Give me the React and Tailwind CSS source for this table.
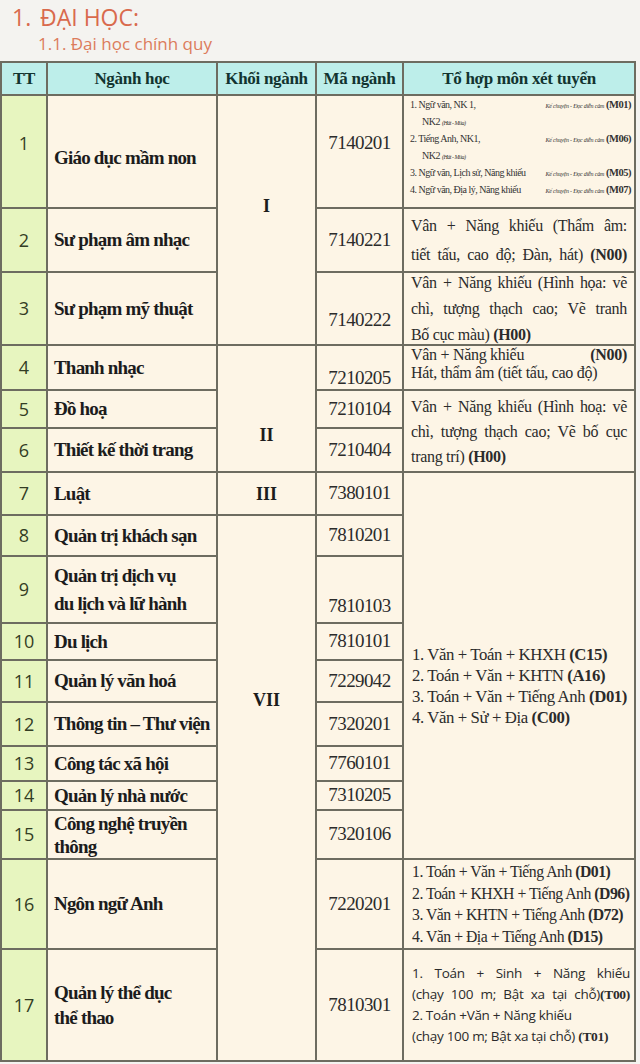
const cell = "bg-[#fdf5e6]";

const rows = [
  { tt: "1", name: "Giáo dục mầm non", code: "7140201", row: "row-start-2", nameCls: "pt-[13px]", codeCls: "pb-[17px]", ttCls: "pb-[17px]" },
  { tt: "2", name: "Sư phạm âm nhạc", code: "7140221", row: "row-start-3" },
  { tt: "3", name: "Sư phạm mỹ thuật", code: "7140222", row: "row-start-4", codeCls: "pt-[23px]" },
  { tt: "4", name: "Thanh nhạc", code: "7210205", row: "row-start-5", codeCls: "pt-[22px]" },
  { tt: "5", name: "Đồ hoạ", code: "7210104", row: "row-start-6" },
  { tt: "6", name: "Thiết kế thời trang", code: "7210404", row: "row-start-7" },
  { tt: "7", name: "Luật", code: "7380101", row: "row-start-8" },
  { tt: "8", name: "Quản trị khách sạn", code: "7810201", row: "row-start-9" },
  { tt: "9", name: ["Quản trị dịch vụ", "du lịch và lữ hành"], code: "7810103", row: "row-start-10", lh: "leading-[28px]", codeCls: "pt-[33px]" },
  { tt: "10", name: "Du lịch", code: "7810101", row: "row-start-11" },
  { tt: "11", name: "Quản lý văn hoá", code: "7229042", row: "row-start-12" },
  { tt: "12", name: "Thông tin – Thư viện", code: "7320201", row: "row-start-13" },
  { tt: "13", name: "Công tác xã hội", code: "7760101", row: "row-start-14" },
  { tt: "14", name: "Quản lý nhà nước", code: "7310205", row: "row-start-15" },
  { tt: "15", name: ["Công nghệ truyền", "thông"], code: "7320106", row: "row-start-16", lh: "leading-[23px]" },
  { tt: "16", name: "Ngôn ngữ Anh", code: "7220201", row: "row-start-17" },
  { tt: "17", name: ["Quản lý thể dục", "thể thao"], code: "7810301", row: "row-start-18", lh: "leading-[25px]" },
];

function TinyLine({ left, code }) {
  return (
    <div className="flex justify-between items-baseline whitespace-nowrap">
      <span>{left}</span>
      <span>
        <i className="text-[6px] tracking-[-0.2px]">Kể chuyện - Đọc diễn cảm</i>{" "}
        <b className="text-[10.5px]">{code}</b>
      </span>
    </div>
  );
}

function J({ children }) {
  return <div className="whitespace-nowrap text-justify [text-align-last:justify]">{children}</div>;
}

export default function App() {
  return (
    <div className="w-[640px] h-[1064px] bg-[#f4f3f0] font-['Liberation_Serif',serif] overflow-hidden">
      <div className="h-[61px] pl-[12px] pt-[2px] font-['Open_Sans',sans-serif] text-[#d96a4d]">
        <div className="flex items-center h-[30px] text-[23px] leading-[30px]">
          <span className="w-[28px]">1.</span>
          <span>ĐẠI HỌC:</span>
        </div>
        <div className="pl-[26px] text-[17px] leading-[24px] text-[#dc7c5c]">1.1. Đại học chính quy</div>
      </div>

      <div className="grid w-[636px] gap-[2px] p-[2px] bg-[#6d6c60] grid-cols-[44px_168px_97px_85px_230px] grid-rows-[31px_111px_62px_71px_43px_36px_42px_41px_39px_65px_35px_40px_42px_33px_27px_47px_88px_110px]">
        {["TT", "Ngành học", "Khối ngành", "Mã ngành", "Tổ hợp môn xét tuyển"].map((h) => (
          <div
            key={h}
            className="row-start-1 bg-[#bdeeea] flex items-center justify-center font-bold text-[17px] tracking-[-0.3px] text-[#123430]"
          >
            {h}
          </div>
        ))}

        {rows.map((r) => (
          <div
            key={"tt" + r.tt}
            className={`col-start-1 ${r.row} bg-[#e7f5bf] flex items-center justify-center font-['Open_Sans',sans-serif] text-[18px] text-[#333d24] ${r.ttCls || ""}`}
          >
            {r.tt}
          </div>
        ))}

        {rows.map((r) => (
          <div
            key={"nm" + r.tt}
            className={`col-start-2 ${r.row} ${cell} flex flex-col justify-center pl-[6px] font-bold text-[19px] tracking-[-0.8px] text-[#1c1c1c] ${r.lh || "leading-[24px]"} ${r.nameCls || ""}`}
          >
            {Array.isArray(r.name) ? r.name.map((n) => <div key={n}>{n}</div>) : <div>{r.name}</div>}
          </div>
        ))}

        {rows.map((r) => (
          <div
            key={"cd" + r.tt}
            className={`col-start-4 ${r.row} ${cell} flex items-center justify-center text-[19px] tracking-[-0.6px] text-[#2b2b2b] ${r.codeCls || ""}`}
          >
            {r.code}
          </div>
        ))}

        <div className={`col-start-3 row-start-2 row-span-3 ${cell} flex justify-center pt-[98px] font-bold text-[18px] leading-[24px] text-[#1c1c1c]`}>I</div>
        <div className={`col-start-3 row-start-5 row-span-3 ${cell} flex justify-center pt-[77px] font-bold text-[18px] leading-[24px] text-[#1c1c1c]`}>II</div>
        <div className={`col-start-3 row-start-8 ${cell} flex items-center justify-center font-bold text-[18px] leading-[24px] text-[#1c1c1c]`}>III</div>
        <div className={`col-start-3 row-start-9 row-span-10 ${cell} flex justify-center pt-[172px] font-bold text-[18px] leading-[24px] text-[#1c1c1c]`}>VII</div>

        <div className={`col-start-5 row-start-2 ${cell} pl-[6px] pr-[3px] pt-[1px] text-[10px] leading-[16px] tracking-[-0.5px] text-[#333]`}>
          <TinyLine left="1. Ngữ văn, NK 1," code="(M01)" />
          <div className="pl-[12px]">
            NK2 <i className="text-[6px]">(Hát - Múa)</i>
          </div>
          <TinyLine left="2. Tiếng Anh, NK1," code="(M06)" />
          <div className="pl-[12px]">
            NK2 <i className="text-[6px]">(Hát - Múa)</i>
          </div>
          <TinyLine left="3. Ngữ văn, Lịch sử, Năng khiếu" code="(M05)" />
          <TinyLine left="4. Ngữ văn, Địa lý, Năng khiếu" code="(M07)" />
        </div>

        <div className={`col-start-5 row-start-3 ${cell} flex flex-col justify-center px-[7px] text-[16px] leading-[29px] tracking-[-0.3px] text-[#2b2b2b]`}>
          <J>Vân + Năng khiếu (Thẩm âm:</J>
          <J>
            tiết tấu, cao độ; Đàn, hát) <b>(N00)</b>
          </J>
        </div>

        <div className={`col-start-5 row-start-4 ${cell} flex flex-col justify-center px-[7px] text-[16px] leading-[26px] tracking-[-0.3px] text-[#2b2b2b]`}>
          <J>Vân + Năng khiếu (Hình họa: vẽ</J>
          <J>chì, tượng thạch cao; Vẽ tranh</J>
          <div className="whitespace-nowrap">
            Bố cục màu) <b>(H00)</b>
          </div>
        </div>

        <div className={`col-start-5 row-start-5 ${cell} px-[7px] text-[16px] leading-[18px] tracking-[-0.3px] text-[#2b2b2b]`}>
          <div className="flex justify-between">
            <span>Vân + Năng khiếu</span>
            <b>(N00)</b>
          </div>
          <div className="whitespace-nowrap">Hát, thẩm âm (tiết tấu, cao độ)</div>
        </div>

        <div className={`col-start-5 row-start-6 row-span-2 ${cell} px-[7px] pt-[3px] text-[16px] leading-[25px] tracking-[-0.3px] text-[#2b2b2b]`}>
          <J>Vân + Năng khiếu (Hình hoạ: vẽ</J>
          <J>chì, tượng thạch cao; Vẽ bố cục</J>
          <div className="whitespace-nowrap">
            trang trí) <b>(H00)</b>
          </div>
        </div>

        <div className={`col-start-5 row-start-8 row-span-9 ${cell} pl-[8px] pt-[171px] text-[16.75px] leading-[21px] tracking-[-0.4px] text-[#2b2b2b] whitespace-nowrap`}>
          <div>
            1. Văn + Toán + KHXH <b>(C15)</b>
          </div>
          <div>
            2. Toán + Văn + KHTN <b>(A16)</b>
          </div>
          <div>
            3. Toán + Văn + Tiếng Anh <b>(D01)</b>
          </div>
          <div>
            4. Văn + Sử + Địa <b>(C00)</b>
          </div>
        </div>

        <div className={`col-start-5 row-start-17 ${cell} flex flex-col justify-center pl-[8px] text-[15.75px] leading-[21.5px] tracking-[-0.5px] text-[#2b2b2b] whitespace-nowrap`}>
          <div>
            1. Toán + Văn + Tiếng Anh <b>(D01)</b>
          </div>
          <div>
            2. Toán + KHXH + Tiếng Anh <b>(D96)</b>
          </div>
          <div>
            3. Văn + KHTN + Tiếng Anh <b>(D72)</b>
          </div>
          <div>
            4. Văn + Địa + Tiếng Anh <b>(D15)</b>
          </div>
        </div>

        <div className={`col-start-5 row-start-18 ${cell} pl-[8px] pr-[4px] pt-[13px] font-['Open_Sans',sans-serif] text-[13.5px] leading-[20.5px] tracking-[-0.3px] text-[#2b2b2b]`}>
          <J>1. Toán + Sinh + Năng khiếu</J>
          <J>
            (chạy 100 m; Bật xa tại chỗ)<b className="font-['Liberation_Serif',serif]">(T00)</b>
          </J>
          <div className="whitespace-nowrap">2. Toán +Văn + Năng khiếu</div>
          <div className="whitespace-nowrap">
            (chạy 100 m; Bật xa tại chỗ) <b className="font-['Liberation_Serif',serif]">(T01)</b>
          </div>
        </div>
      </div>
    </div>
  );
}
